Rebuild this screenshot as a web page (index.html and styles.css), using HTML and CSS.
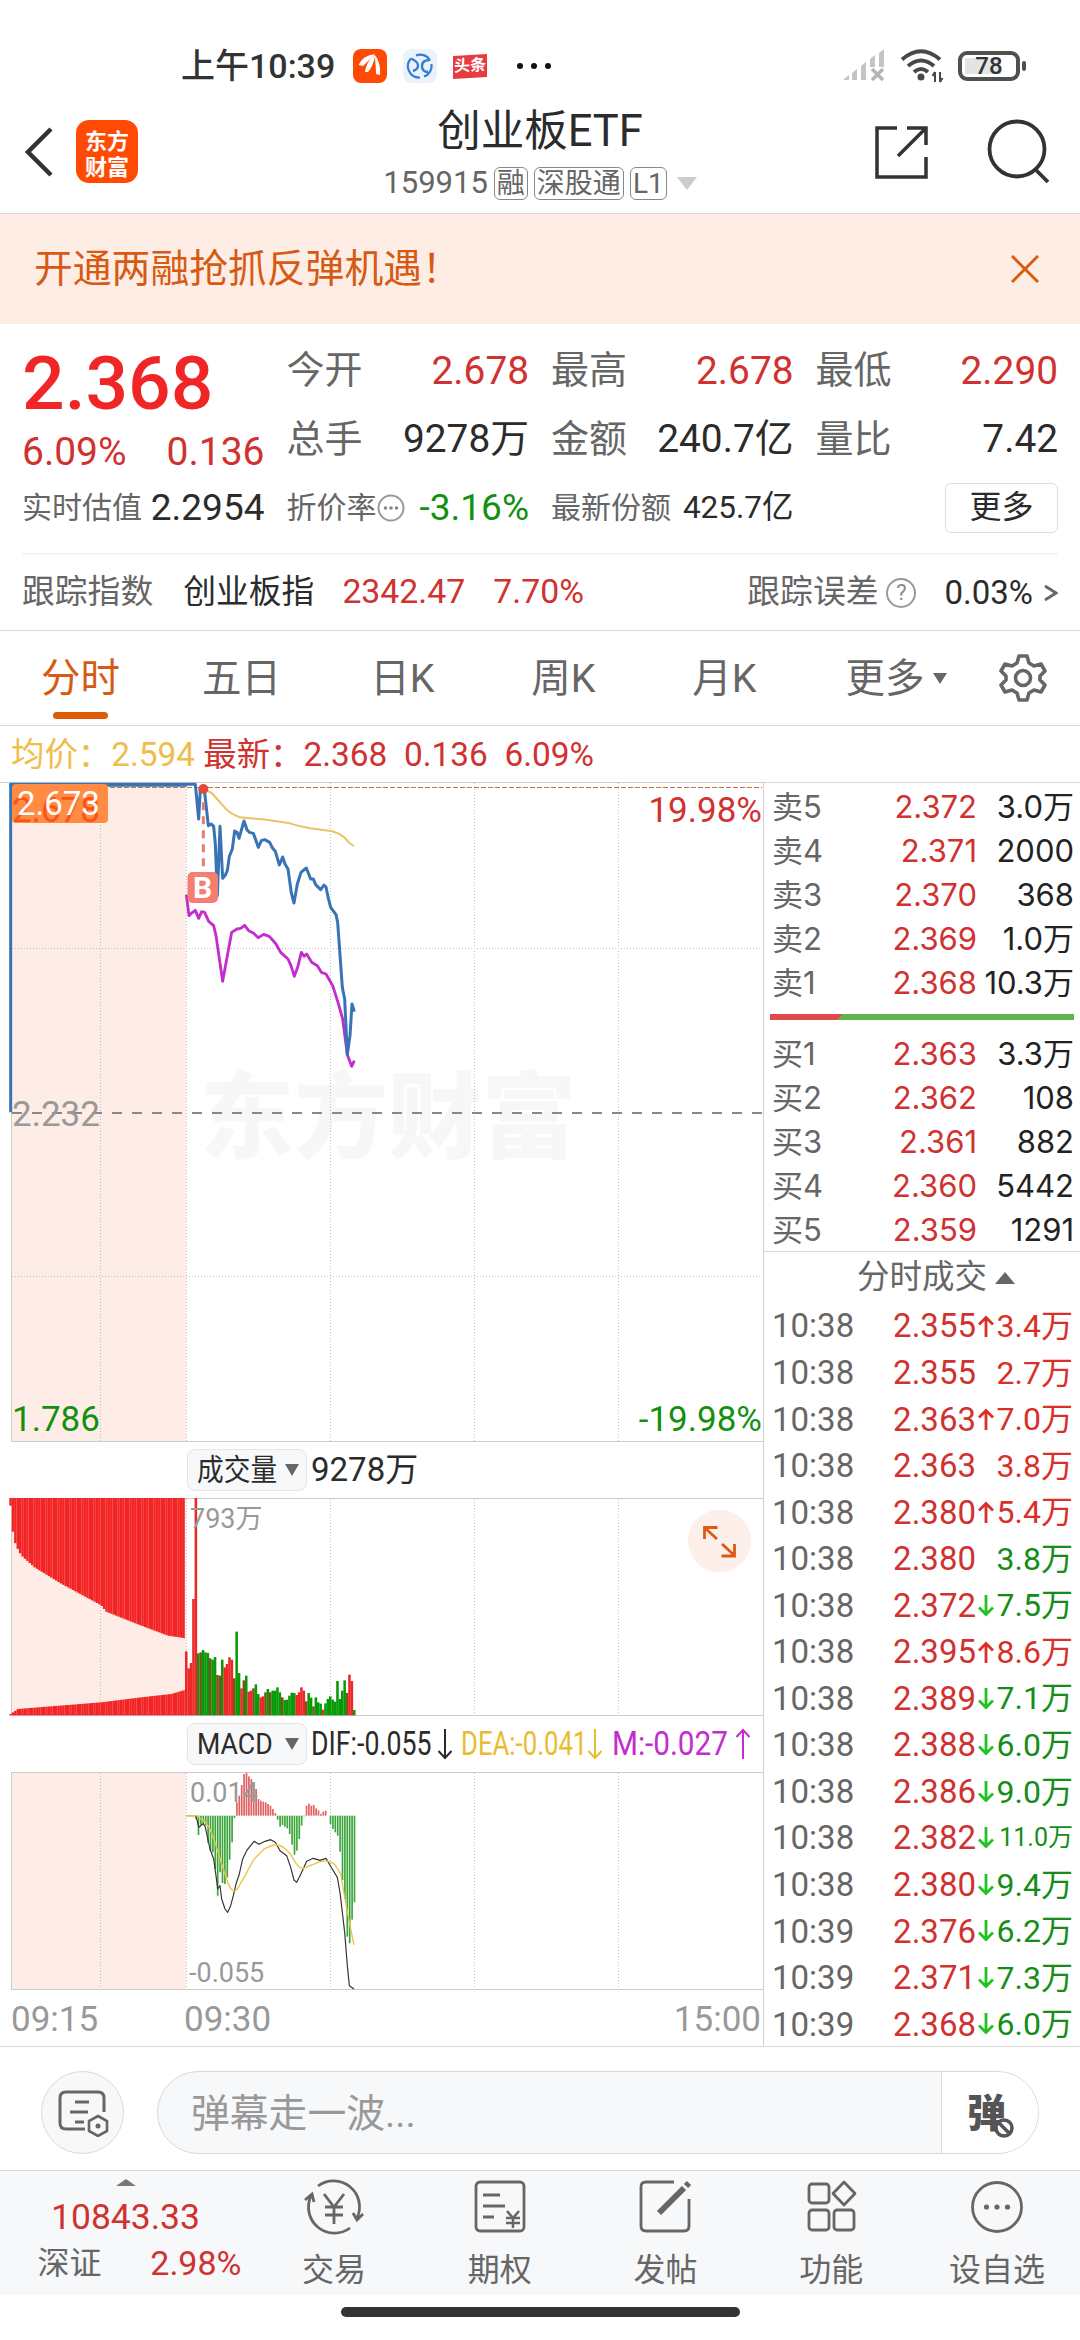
FILE: index.html
```html
<!DOCTYPE html>
<html lang="zh-CN">
<head>
	<meta charset="utf-8">
	<title>创业板ETF</title>
	<link rel="stylesheet" href="styles.css">
</head>
<body>
	<svg width="0" height="0" class="defs">
		<symbol id="up" viewBox="0 0 16 22"><path d="M8 22V3M1 9.500l7-7 7 7" fill="none" stroke="currentColor" stroke-width="2.800"/></symbol>
		<symbol id="down" viewBox="0 0 16 22"><path d="M8 0v19M1 12.500l7 7 7-7" fill="none" stroke="currentColor" stroke-width="2.800"/></symbol>
		<symbol id="long-down" viewBox="0 0 16 32"><path d="M8 1v29M1.500 23L8 30l6.500-7" fill="none" stroke="currentColor" stroke-width="2"/></symbol>
		<symbol id="long-up" viewBox="0 0 16 32"><path d="M8 31V2M1.500 9L8 2l6.500 7" fill="none" stroke="currentColor" stroke-width="2"/></symbol>
	</svg>

	<div class="status">
		<span class="clock">上午10:39</span>
		<svg class="app" width="34" height="34" viewBox="0 0 34 34">
			<rect width="34" height="34" rx="8" fill="#ff4a04"/>
			<path d="M6 16C8 10 14 6 22 5.500C17 8 12 12 6.500 16zM12 23C13 15 17 9 22.500 6C21 12 19 19 15 23zM22 6C25 10 28 17 27 26L23 25C23 18 22 12 22 6z" fill="#fff"/>
			<path d="M6 16C9 9 15 6 22 5.500L10 17z" fill="#fff"/>
		</svg>
		<svg class="app" width="34" height="34" viewBox="0 0 34 34">
			<rect width="34" height="34" rx="8" fill="#ecf2fa"/>
			<path d="M13 6.500A11.300 11.300 0 0 1 27 11M28.500 15A11.300 11.300 0 0 1 21 27.500M17 28.500A11.300 11.300 0 0 1 8 9.500" fill="none" stroke="#2f7fd6" stroke-width="2.200"/>
			<path d="M8 9.500q7 3 7 7t-5 5.500M27 11q-8 0-8 6t6 6" fill="none" stroke="#2f7fd6" stroke-width="2.400"/>
		</svg>
		<span class="toutiao">头条</span>
		<span class="dots"><i></i><i></i><i></i></span>
		<svg class="signal" width="42" height="32" viewBox="0 0 42 32" fill="#c4c4c4">
			<path d="M0 30l6-5v5zM9 23l5-4v11H9zM18 16l5-4v18h-5zM27 9l5-4v12h-5zM36 3l5-4v18h-5z"/>
			<path d="M29 19l11 11M40 19L29 30" stroke="#b5b5b5" stroke-width="3.500"/>
		</svg>
		<svg class="wifi" width="44" height="34" viewBox="0 0 44 34" fill="none" stroke="#484848" stroke-width="4">
			<path d="M2 10.500Q21-6 40 10.500M8 17q13-11 26 0M14 23q7-6 14 0"/>
			<circle cx="21" cy="28" r="2.500" fill="#484848" stroke-width="2"/>
			<path d="M35 23v10M40 23v10M32.500 27l2.500-4M42.500 29L40 33" stroke-width="2"/>
		</svg>
		<span class="battery">78</span>
		<span class="battery-tip"></span>
	</div>

	<div class="header">
		<div class="header-left">
			<svg width="28" height="50" viewBox="0 0 28 50"><path d="M26 2L3 25l23 23" fill="none" stroke="#333" stroke-width="4.500"/></svg>
			<div class="logo">东方<br>财富</div>
		</div>
		<div class="header-title">
			<h1>创业板ETF</h1>
			<div class="code">159915<span>融</span><span>深股通</span><span>L1</span><i></i></div>
		</div>
		<div class="header-right">
			<svg width="56" height="56" viewBox="0 0 56 56" fill="none" stroke="#333" stroke-width="3.500"><path d="M23 4H3v49h49V33M33 4h19v17M52 4L24 32"/></svg>
			<svg width="66" height="66" viewBox="0 0 66 66" fill="none" stroke="#333" stroke-width="3.800"><circle cx="31" cy="30" r="27.500"/><path d="M50 51l12 12"/></svg>
		</div>
	</div>

	<div class="banner">
		<span>开通两融抢抓反弹机遇！</span>
		<svg width="28" height="28" viewBox="0 0 28 28"><path d="M1 1l26 26M27 1L1 27" stroke="#dc5a10" stroke-width="3"/></svg>
	</div>

	<div class="quote">
		<div class="price red">
			<strong>2.368</strong>
			<p><span>6.09%</span><span>0.136</span></p>
		</div>
		<div class="cell"><label>今开</label><b class="red">2.678</b></div>
		<div class="cell"><label>最高</label><b class="red">2.678</b></div>
		<div class="cell"><label>最低</label><b class="red">2.290</b></div>
		<div class="cell"><label>总手</label><b>9278万</b></div>
		<div class="cell"><label>金额</label><b>240.7亿</b></div>
		<div class="cell"><label>量比</label><b>7.42</b></div>
		<div class="cell small"><label>实时估值</label><b>2.2954</b></div>
		<div class="cell small">
			<label>折价率<svg width="28" height="28" viewBox="0 0 28 28"><circle cx="14" cy="14" r="12.500" fill="none" stroke="#999" stroke-width="2"/><g fill="#888"><circle cx="8.500" cy="14" r="1.800"/><circle cx="14" cy="14" r="1.800"/><circle cx="19.500" cy="14" r="1.800"/></g></svg></label>
			<b class="green">-3.16%</b>
		</div>
		<div class="cell small share"><label>最新份额</label><b>425.7亿</b></div>
		<div class="cell small"><span class="more">更多</span></div>
	</div>

	<div class="track">
		<label>跟踪指数</label>
		<span class="name">创业板指</span>
		<span class="red">2342.47</span>
		<span class="red pct">7.70%</span>
		<label class="error">跟踪误差</label>
		<span class="help">?</span>
		<span class="rate">0.03%</span>
		<svg width="14" height="20" viewBox="0 0 14 20"><path d="M1 3l11 7-11 7" fill="none" stroke="#666" stroke-width="2.800"/></svg>
	</div>

	<div class="tabs">
		<div class="tab active">分时</div>
		<div class="tab">五日</div>
		<div class="tab">日K</div>
		<div class="tab">周K</div>
		<div class="tab">月K</div>
		<div class="tab more-tab">更多<i></i></div>
		<svg width="48" height="48" viewBox="0 0 48 48" fill="none" stroke="#666" stroke-width="3.600" stroke-linejoin="round">
			<path d="M20 2h8l2 7 5 3 7-2 4 7-5 5v4l5 5-4 7-7-2-5 3-2 7h-8l-2-7-5-3-7 2-4-7 5-5v-4l-5-5 4-7 7 2 5-3z"/>
			<circle cx="24" cy="24" r="7.500"/>
		</svg>
	</div>

	<div class="legend">
		<span class="avg">均价：2.594</span>
		<span class="red">最新：2.368&nbsp; 0.136&nbsp; 6.09%</span>
	</div>

	<div class="main">
		<div class="charts">
			<svg class="chart" width="763" height="660" viewBox="0 0 763 660">
				<rect x="12" y="0" width="174" height="659" fill="#fdede6"/>
				<text class="watermark" x="200" y="369">东方财富</text>
				<path class="grid" d="M100.500 1v658M186.500 1v658M330.500 1v658M474.500 1v658M618.500 1v658M12 166.500h750M12 494.500h750"/>
				<path class="frame" d="M0 .5h763M11.500 1v658.500H763"/>
				<path d="M12 331h750" stroke="#888" stroke-width="2" stroke-dasharray="10 10"/>
				<path d="M12 5.500h750" stroke="#c8703c" stroke-width="1.200" stroke-dasharray="5 2"/>
				<!-- curves are plotted on a 3x grid -->
				<g transform="translate(0 -13) scale(.33333)" fill="none" stroke-linejoin="round">
					<path stroke="#ecc065" stroke-width="6" d="M616 62L635 72 665 105Q685 133 720 145L800 152 870 163Q900 173 930 178L992 186Q1015 190 1035 207L1048 222 1062 231"/>
					<path stroke="#c42ccd" stroke-width="8.500" d="M559 377L567 440 575 432 586 424 596 448 605 428 614 430 626 457 641 470 648 500 668 637 682 560 695 490 711 480 722 478 734 469 746 485 760 492 775 506 791 496 808 502 828 525 842 550 864 570 873 590 883 622 893 595 904 550 912 562 920 555 935 580 952 590 964 610 978 615 998 650 1014 700 1028 750 1042 857 1055 892 1063 875"/>
					<path stroke="#3873b5" stroke-width="9" d="M32 1030V46H586L596 150 601 60 614 70 625 170 634 165 641 172 646 225 652 380 660 172 668 328 676 318 682 305 688 262 697 240 704 186 711 190 717 208 732 156 741 182 748 190 760 193 775 235 784 215 794 212 809 220 818 238 826 247 838 288 848 264 855 285 864 300 874 372 882 402 892 345 903 310 919 297 932 330 940 330 947 347 962 362 972 348 978 354 985 388 992 415 1008 437 1013 460 1027 655 1034 690 1042 857 1050 800 1056 705 1063 728"/>
					<path stroke="#3873b5" stroke-width="11" d="M28 48H560"/>
					<path stroke="#ea7b70" stroke-width="9" stroke-dasharray="24 18" d="M610 100V295"/>
					<circle cx="610" cy="60" r="15" fill="#e44a3c"/>
				</g>
				<rect x="187.500" y="90" width="30.500" height="31" rx="5" fill="#f57e70"/>
				<text class="buy" x="202.500" y="116">B</text>
				<rect x="12" y="2" width="96" height="39" rx="4" fill="#ff8b45"/>
				<text class="axis under" x="12" y="40">2.678</text>
				<text class="tag" x="17" y="33">2.673</text>
				<text class="axis red end" x="762" y="40">19.98%</text>
				<text class="axis gray" x="12" y="344">2.232</text>
				<text class="axis green" x="12" y="649">1.786</text>
				<text class="axis green end" x="762" y="649">-19.98%</text>
			</svg>

			<div class="bar">
				<span class="pick"><em>成交量</em><i></i></span>
				<span class="total">9278万</span>
			</div>
			<svg class="chart" width="763" height="218" viewBox="0 0 763 218">
				<rect x="12" y="0" width="174" height="217" fill="#fdede6"/>
				<path class="grid" d="M100.500 1v216M186.500 1v216M330.500 1v216M474.500 1v216M618.500 1v216"/>
				<path class="frame" d="M12 .5h751M11.500 0v217.500H763"/>
				<g id="auction" transform="scale(.33333)"></g>
				<g id="volume" transform="scale(.33333)"></g>
				<text class="axis mini gray" x="190" y="30">793万</text>
				<circle cx="719.500" cy="43" r="31.500" fill="#fdf0ea"/>
				<path d="M704.500 41V29.500h13M705 30l12 11M734.500 46v12h-13M734 57l-12-11" fill="none" stroke="#dc5a14" stroke-width="2.800"/>
			</svg>

			<div class="bar">
				<span class="pick"><em>MACD</em><i></i></span>
				<span class="dif"><em>DIF:-0.055</em><svg width="16" height="32"><use href="#long-down"/></svg></span>
				<span class="dea"><em>DEA:-0.041</em><svg width="16" height="32"><use href="#long-down"/></svg></span>
				<span class="macd"><em>M:-0.027</em><svg width="16" height="32"><use href="#long-up"/></svg></span>
			</div>
			<svg class="chart" width="763" height="218" viewBox="0 0 763 218">
				<rect x="12" y="0" width="174" height="217" fill="#fdede6"/>
				<path class="grid" d="M100.500 1v216M186.500 1v216M330.500 1v216M474.500 1v216M618.500 1v216"/>
				<path class="frame" d="M12 .5h751M11.500 0v217.500H763"/>
				<g id="macd" transform="scale(.33333)"></g>
				<g transform="translate(0 -73) scale(.33333)" fill="none" stroke-linejoin="round">
					<path stroke="#333" stroke-width="3.500" d="M559 350H588L596 385 603 380 610 374 616 385 630 450 641 480 648 530 653 570 660 560 665 600 675 630 683 640 692 620 700 590 708 555 718 525 728 480 740 455 762 427 777 436 795 427 812 422 826 430 840 455 860 470 872 505 882 543 890 550 900 530 912 505 920 487 940 478 960 484 978 478 995 507 1012 535 1020 580 1034 700 1042 800 1048 860 1062 870"/>
					<path stroke="#ecc344" stroke-width="4" d="M559 350H590L615 368 630 390 645 430 665 495 685 555Q700 590 715 565L735 530 760 483 790 452Q826 428 850 445L872 465Q895 512 910 508L930 500 955 490Q985 480 1005 497L1022 525 1035 600 1048 670 1062 738"/>
				</g>
				<text class="axis mini gray" x="190" y="30">0.014</text>
				<text class="axis mini gray" x="189" y="210">-0.055</text>
			</svg>
			<div class="times"><span>09:15</span><span>09:30</span><span class="close">15:00</span></div>
		</div>

		<div class="side">
			<div class="book">
				<div class="level"><label>卖5</label><b>2.372</b><span>3.0万</span></div>
				<div class="level"><label>卖4</label><b>2.371</b><span>2000</span></div>
				<div class="level"><label>卖3</label><b>2.370</b><span>368</span></div>
				<div class="level"><label>卖2</label><b>2.369</b><span>1.0万</span></div>
				<div class="level"><label>卖1</label><b>2.368</b><span>10.3万</span></div>
				<div class="ratio"></div>
				<div class="level"><label>买1</label><b>2.363</b><span>3.3万</span></div>
				<div class="level"><label>买2</label><b>2.362</b><span>108</span></div>
				<div class="level"><label>买3</label><b>2.361</b><span>882</span></div>
				<div class="level"><label>买4</label><b>2.360</b><span>5442</span></div>
				<div class="level"><label>买5</label><b>2.359</b><span>1291</span></div>
			</div>
			<div class="deals-title">分时成交<i></i></div>
			<div class="deals">
				<div class="deal up"><label>10:38</label><b>2.355</b><svg><use href="#up"/></svg><span>3.4万</span></div>
				<div class="deal up"><label>10:38</label><b>2.355</b><span>2.7万</span></div>
				<div class="deal up"><label>10:38</label><b>2.363</b><svg><use href="#up"/></svg><span>7.0万</span></div>
				<div class="deal up"><label>10:38</label><b>2.363</b><span>3.8万</span></div>
				<div class="deal up"><label>10:38</label><b>2.380</b><svg><use href="#up"/></svg><span>5.4万</span></div>
				<div class="deal down"><label>10:38</label><b>2.380</b><span>3.8万</span></div>
				<div class="deal down"><label>10:38</label><b>2.372</b><svg><use href="#down"/></svg><span>7.5万</span></div>
				<div class="deal up"><label>10:38</label><b>2.395</b><svg><use href="#up"/></svg><span>8.6万</span></div>
				<div class="deal down"><label>10:38</label><b>2.389</b><svg><use href="#down"/></svg><span>7.1万</span></div>
				<div class="deal down"><label>10:38</label><b>2.388</b><svg><use href="#down"/></svg><span>6.0万</span></div>
				<div class="deal down"><label>10:38</label><b>2.386</b><svg><use href="#down"/></svg><span>9.0万</span></div>
				<div class="deal down"><label>10:38</label><b>2.382</b><svg><use href="#down"/></svg><span class="long">11.0万</span></div>
				<div class="deal down"><label>10:38</label><b>2.380</b><svg><use href="#down"/></svg><span>9.4万</span></div>
				<div class="deal down"><label>10:39</label><b>2.376</b><svg><use href="#down"/></svg><span>6.2万</span></div>
				<div class="deal down"><label>10:39</label><b>2.371</b><svg><use href="#down"/></svg><span>7.3万</span></div>
				<div class="deal down"><label>10:39</label><b>2.368</b><svg><use href="#down"/></svg><span>6.0万</span></div>
			</div>
		</div>
	</div>

	<div class="chat">
		<div class="round">
			<svg width="52" height="48" viewBox="0 0 52 48" fill="none" stroke="#666" stroke-width="3">
				<path d="M28 40H9q-6 0-6-6V9q0-6 6-6h32q6 0 6 6v14M18 13h14M13 23h18M18 33h9" />
				<path d="M41 27l9 5v10l-9 5-9-5V32z" stroke-width="2.600"/><circle cx="41" cy="37" r="2.500" fill="#666" stroke="none"/>
			</svg>
		</div>
		<div class="input">
			<span class="placeholder">弹幕走一波...</span>
			<span class="danmu">弹<svg width="22" height="22" viewBox="0 0 22 22"><circle cx="11" cy="11" r="8" fill="#fff" stroke="#555" stroke-width="3.500"/><path d="M6 6l10 10" stroke="#555" stroke-width="3.500"/></svg></span>
		</div>
	</div>

	<div class="footer">
		<div class="index red">
			<i></i>
			<strong>10843.33</strong>
			<p><label>深证</label><span>2.98%</span></p>
		</div>
		<div class="item">
			<svg width="60" height="56" viewBox="0 0 60 56"><path d="M14 7a26 26 0 0 1 39 32M46 49A26 26 0 0 1 7 17M1 21l7-6 2 8M59 35l-6 6-4-7M20 15l10 13 10-13M21 28h18M21 36h18M30 28v17"/></svg>
			<span>交易</span>
		</div>
		<div class="item">
			<svg width="60" height="56" viewBox="0 0 60 56"><rect x="6" y="3" width="48" height="49" rx="4"/><path d="M13 16h17M13 27h22M13 38h11"/><path d="M37 32l6 7 6-7M36 39h14M36 44h14M43 39v10" stroke-width="2.500"/></svg>
			<span>期权</span>
		</div>
		<div class="item">
			<svg width="60" height="56" viewBox="0 0 60 56"><path d="M39 3H11q-5 0-5 5v39q0 5 5 5h38q5 0 5-5V20"/><path d="M24 34l25-25" stroke-width="6"/><path d="M51 7l3-3" stroke-width="6"/></svg>
			<span>发帖</span>
		</div>
		<div class="item">
			<svg width="60" height="56" viewBox="0 0 60 56"><rect x="8" y="5" width="20" height="19" rx="3"/><rect x="8" y="31" width="20" height="20" rx="3"/><rect x="33" y="31" width="20" height="20" rx="3"/><path d="M43 3l11 11.500L43 26 32 14.500z" stroke-linejoin="round"/></svg>
			<span>功能</span>
		</div>
		<div class="item">
			<svg width="60" height="56" viewBox="0 0 60 56"><circle cx="30" cy="28" r="24.500"/><g fill="#666" stroke="none"><circle cx="19.500" cy="28" r="2.600"/><circle cx="30" cy="28" r="2.600"/><circle cx="40.500" cy="28" r="2.600"/></g></svg>
			<span>设自选</span>
		</div>
	</div>
	<div class="home"></div>

	<script src="script.js"></script>
</body>
</html>
```
FILE: styles.css
```css
body{
	margin: 0;
	width: 1080px;
	height: 2340px;
	overflow: hidden;
	background: #fff;
	color: #2b2b2b;
	font-family: Roboto, "Noto Sans CJK SC", sans-serif;
	line-height: 1.2;
}
h1,p{
	margin: 0;
	font-weight: 400;
}
b,strong{
	font-weight: 400;
}
em,i{
	font-style: normal;
}
svg{
	flex: none;
}
.defs{
	position: absolute;
}
.red{
	color: #d0322f;
	fill: #d0322f;
}
.green{
	color: #12900f;
	fill: #12900f;
}
.gray{
	fill: #999;
}

/* 状态栏 */
.status{
	display: flex;
	align-items: center;
	height: 68px;
	padding: 32px 54px 0 181px;
}
.clock{
	width: 156px;
	margin-right: 16px;
	font-size: 34px;
	font-weight: 500;
	color: #333;
	white-space: nowrap;
}
.app{
	margin-right: 16px;
}
.toutiao{
	width: 34px;
	height: 23px;
	line-height: 22px;
	background: #e83b40;
	color: #fff;
	font-size: 16px;
	font-weight: 700;
	text-align: center;
	transform: skewY(-3deg);
}
.dots{
	display: flex;
	gap: 8px;
	margin-left: 30px;
}
.dots i{
	width: 6px;
	height: 6px;
	border-radius: 3px;
	background: #111;
}
.signal{
	margin-left: auto;
}
.wifi{
	margin: 0 14px 0 15px;
}
.battery{
	box-sizing: border-box;
	width: 62px;
	height: 30px;
	border: 4px solid #505050;
	border-radius: 9px;
	background: #fff linear-gradient(#e4e4e4, #e4e4e4) no-repeat 3px 3px / 36px 16px;
	line-height: 23px;
	font-size: 24px;
	font-weight: 500;
	text-align: center;
	color: #333;
}
.battery-tip{
	width: 4px;
	height: 10px;
	margin-left: 2px;
	border-radius: 2px;
	background: #505050;
}

/* 标题 */
.header{
	display: grid;
	grid-template-columns: 1fr auto 1fr;
	height: 113px;
	border-bottom: 1px solid #d6d6d6;
}
.header-left{
	display: flex;
	align-items: center;
	gap: 23px;
	padding: 0 0 10px 25px;
}
.logo{
	width: 62px;
	height: 54px;
	padding-top: 9px;
	border-radius: 13px;
	background: #ff4a04;
	color: #fff;
	font-size: 22px;
	font-weight: 700;
	line-height: 26px;
	text-align: center;
}
.header-title{
	text-align: center;
}
.header-title h1{
	font-size: 43.500px;
	line-height: 63px;
}
.code{
	display: flex;
	align-items: center;
	justify-content: center;
	height: 40px;
	font-size: 31px;
	color: #666;
}
.code span{
	height: 31px;
	margin-left: 6px;
	padding: 0 2px;
	border: 1px solid #888;
	border-radius: 6px;
	font-size: 28px;
	line-height: 31px;
}
.code i{
	margin-left: 10px;
	border: 10px solid transparent;
	border-top: 13px solid #ccc;
	border-bottom: 0;
}
.header-right{
	display: flex;
	align-items: center;
	justify-content: flex-end;
	gap: 56px;
	padding: 0 28px 10px 0;
}

.banner{
	display: flex;
	align-items: center;
	justify-content: space-between;
	height: 110px;
	padding: 0 41px 0 34px;
	background: #fdede4;
	color: #d65a14;
	font-size: 38.800px;
}

/* 行情 */
.quote{
	display: grid;
	grid-template-columns: repeat(4, 1fr);
	grid-template-rows: 68px 69px 68px;
	column-gap: 22px;
	padding: 13px 22px 11px;
}
.price{
	grid-row: span 2;
}
.price strong{
	display: block;
	font-size: 75px;
	font-weight: 500;
	line-height: 92px;
	color: #f02626;
}
.price p{
	display: flex;
	justify-content: space-between;
	font-size: 39px;
	line-height: 46px;
}
.cell{
	display: flex;
	align-items: center;
	justify-content: space-between;
	font-size: 38.800px;
	white-space: nowrap;
}
.cell label{
	display: flex;
	align-items: center;
	font-size: 38px;
	color: #666;
}
.small{
	font-size: 37px;
}
.small label{
	font-size: 30px;
}
.share{
	font-size: 31.500px;
}
.more{
	width: 111px;
	height: 48px;
	margin-left: auto;
	border: 1px solid #ddd;
	border-radius: 6px;
	font-size: 32px;
	line-height: 46px;
	text-align: center;
}
.track{
	display: flex;
	align-items: center;
	height: 75px;
	margin: 0 22px;
	border-top: 2px solid #f4f4f4;
	font-size: 33.800px;
}
.track label,.track .name{
	font-size: 32.800px;
	color: #666;
}
.track .name{
	margin: 0 28px 0 30px;
	color: #2b2b2b;
}
.pct{
	margin-left: 28px;
}
.track .error{
	margin-left: auto;
}
.help{
	width: 26px;
	height: 26px;
	margin: 0 28px 0 8px;
	border: 2px solid #999;
	border-radius: 50%;
	color: #888;
	font-size: 22px;
	line-height: 26px;
	text-align: center;
}
.rate{
	font-size: 33px;
}
.track svg{
	margin-left: 11px;
}

.tabs{
	display: flex;
	align-items: center;
	height: 94px;
	border-top: 1px solid #d6d6d6;
	border-bottom: 1px solid #d6d6d6;
}
.tab{
	display: flex;
	flex-direction: column;
	align-items: center;
	width: 161px;
	font-size: 39.500px;
	line-height: 97px;
	color: #666;
}
.active{
	color: #d65a14;
}
.active:after{
	content: "";
	width: 55px;
	height: 7px;
	margin: -15px 0 8px;
	border-radius: 4px;
	background: #e05a0c;
}
.more-tab{
	flex-direction: row;
	justify-content: center;
	width: 182px;
	margin-right: 12px;
}
.more-tab i{
	margin-left: 8px;
	border: 7px solid transparent;
	border-top: 11px solid #666;
	border-bottom: 0;
}
.legend{
	height: 56px;
	padding-left: 11px;
	font-size: 33.400px;
	line-height: 57px;
	white-space: nowrap;
}
.avg{
	color: #eebd4c;
}

/* 图表 */
.main{
	display: flex;
	height: 1264px;
	border-bottom: 1px solid #d6d6d6;
}
.charts{
	width: 763px;
	border-right: 1px solid #d0d0d0;
}
.chart{
	display: block;
}
.grid,.frame{
	fill: none;
	stroke: #ccc;
}
.grid{
	stroke: #c0c0c0;
	stroke-dasharray: 1 2;
}
.axis{
	font-size: 35px;
}
.mini{
	font-size: 27px;
}
.end{
	text-anchor: end;
}
.tag{
	fill: #fff;
	font-size: 33px;
}
.under{
	fill: #fb5410;
}
.buy{
	fill: #fff;
	font-size: 30px;
	font-weight: 700;
	text-anchor: middle;
}
.watermark{
	fill: #f7f7f7;
	font-size: 94px;
	font-weight: 900;
}
.bar{
	display: flex;
	align-items: center;
	height: 56px;
	padding-left: 187px;
}
.bar em{
	display: inline-block;
	transform-origin: 0 50%;
	white-space: nowrap;
}
.pick{
	display: flex;
	align-items: center;
	box-sizing: border-box;
	width: 120px;
	height: 42px;
	padding-left: 9px;
	border: 1px solid #e4e5e8;
	border-radius: 8px;
	background: #f7f8fa;
	font-size: 30px;
}
.pick em{
	width: 88px;
	transform: scaleX(.89);
}
.pick i{
	border: 7px solid transparent;
	border-top: 12px solid #666;
	border-bottom: 0;
}
.total{
	margin-left: 4px;
	font-size: 33px;
}
.dif,.dea,.macd{
	display: flex;
	align-items: center;
	font-size: 33px;
}
.dif{
	width: 150px;
	margin-left: 4px;
}
.dif em,.dea em{
	width: 126px;
	transform: scaleX(.81);
}
.dea{
	width: 151px;
	color: #e9bc30;
}
.dea em{
	transform: scaleX(.78);
}
.macd{
	color: #c42ccd;
}
.macd em{
	width: 123px;
	transform: scaleX(.9);
}
.times{
	display: flex;
	height: 56px;
	padding: 0 2px 0 11px;
	color: #999;
	font-size: 35px;
	line-height: 60px;
}
.times span{
	width: 173px;
}
.times .close{
	width: auto;
	margin-left: auto;
}

/* 盘口 */
.side{
	flex: 1;
	color: #666;
}
.book{
	height: 466px;
	padding: 2px 6px 0 8px;
	border-top: 1px solid #d6d6d6;
	border-bottom: 1px solid #d6d6d6;
	font-family: Inter, "Noto Sans CJK SC", sans-serif;
	font-size: 31px;
}
.level,.deal{
	display: flex;
	align-items: center;
	height: 44px;
	white-space: nowrap;
}
.level b,.deal b{
	color: #d0322f;
	text-align: right;
}
.level label{
	width: 70px;
}
.level b{
	width: 135px;
}
.level span{
	margin-left: auto;
	color: #222;
}
.ratio{
	height: 6px;
	margin: 9px 0 12px -2px;
	background: linear-gradient(135deg, #e04a4a 51px, #5fb54c 52px);
}
.deals-title{
	display: flex;
	align-items: center;
	justify-content: center;
	height: 51px;
	padding-left: 28px;
	font-size: 32.500px;
}
.deals-title i{
	margin-left: 8px;
	border: 10px solid transparent;
	border-bottom: 12px solid #666;
	border-top: 0;
}
.deals{
	padding: 0 7px 0 8px;
	font-size: 33px;
}
.deal{
	height: 46.550px;
}
.deal b{
	width: 123px;
}
.deal label{
	width: 81px;
}
.deal svg{
	width: 16px;
	height: 22px;
	margin-left: 2px;
}
.deal span{
	margin-left: auto;
	font-size: 32px;
}
.deal .long{
	font-size: 25px;
}
.up svg,.up span{
	color: #d83028;
}
.down svg{
	color: #1fc421;
}
.down span{
	color: #168d18;
}

/* 弹幕 */
.chat{
	display: flex;
	align-items: center;
	height: 115px;
	padding: 8px 41px 0;
	border-bottom: 1px solid #d6d6d6;
}
.round{
	display: flex;
	align-items: center;
	justify-content: center;
	box-sizing: border-box;
	width: 83px;
	height: 83px;
	border: 1px solid #d8dade;
	border-radius: 50%;
	background: #f7f8fa;
}
.input{
	display: flex;
	flex: 1;
	box-sizing: border-box;
	height: 83px;
	margin-left: 33px;
	border: 1px solid #d5d7da;
	border-radius: 42px;
	background: #f7f8fa;
	overflow: hidden;
	line-height: 84px;
}
.placeholder{
	flex: 1;
	padding-left: 33px;
	color: #999;
	font-size: 38.800px;
}
.danmu{
	position: relative;
	width: 71px;
	padding-left: 25px;
	border-left: 1px solid #d5d7da;
	background: #fff;
	color: #555;
	font-size: 39px;
	font-weight: 900;
}
.danmu svg{
	position: absolute;
	left: 51px;
	top: 45px;
}

/* 底部 */
.footer{
	display: flex;
	height: 124px;
	background: #f7f8fa;
}
.index{
	display: flex;
	flex-direction: column;
	align-items: center;
	width: 251px;
}
.index i{
	margin-top: 8px;
	border: 10px solid transparent;
	border-bottom: 7px solid #777;
	border-top: 0;
}
.index strong{
	font-size: 35.500px;
	line-height: 42px;
	margin: 10px 0 4px;
}
.index p{
	display: flex;
	justify-content: space-between;
	width: 204px;
	margin-left: 28px;
	font-size: 34px;
	line-height: 42px;
}
.index label{
	font-size: 32px;
	color: #666;
}
.item{
	display: flex;
	flex: 1;
	flex-direction: column;
	align-items: center;
	padding-top: 8px;
	color: #666;
	font-size: 32px;
	line-height: 44px;
}
.item svg{
	margin-bottom: 13px;
	fill: none;
	stroke: #666;
	stroke-width: 2.800;
}
.home{
	width: 399px;
	height: 10px;
	margin: 12px auto 0;
	border-radius: 5px;
	background: #333;
}
```
FILE: script.js
```js
var NS = 'http://www.w3.org/2000/svg';
var START = 555, STEP = 7.2, BOTTOM = 652, ZERO = 131;

function bar(parent, x, y, w, h, color) {
	var r = document.createElementNS(NS, 'rect');
	r.setAttribute('x', x.toFixed(1));
	r.setAttribute('y', y);
	r.setAttribute('width', w);
	r.setAttribute('height', h);
	r.setAttribute('fill', color);
	parent.appendChild(r);
}

// linear interpolation over [x, y] pairs
function at(points, x) {
	for (var i = 1; i < points.length; i++) {
		var a = points[i - 1], b = points[i];
		if (x <= b[0]) return a[1] + (b[1] - a[1]) * (x - a[0]) / (b[0] - a[0]);
	}
	return points[points.length - 1][1];
}

// 集合竞价
var auction = document.getElementById('auction');
var upper = [[28, 23], [36, 110], [44, 142], [60, 172], [100, 208], [180, 257], [300, 322], [315, 341], [400, 375], [500, 413], [555, 421]];
var lower = [[28, 4], [50, 19], [300, 39], [420, 54], [510, 64], [555, 77]];
for (var i = 0, x = 28; x < 554; i++, x += 7.2) {
	var h = at(upper, x), l = at(lower, x), w = Math.min(7.4, 555 - x);
	bar(auction, x, 0, w, h, i % 2 ? '#f12626' : '#f42222');
	bar(auction, x, BOTTOM - l, w, l, i % 2 ? '#f12626' : '#f42222');
}

// 成交量: r 涨, g 跌, m 平
var colors = { r: '#ee2626', g: '#069b06', m: '#80501a' };
var volume = ('r192 r141 r157 r349 r652 g186 m189 g196 g189 g187 m171 g167 g175 m121 m119 g167 r144 r154 r174 r167 m111 ' +
	'g251 g127 r81 m105 g119 r71 r74 m81 g93 g64 r54 r57 m69 g79 m69 g74 g74 g84 g69 m54 g46 g47 g59 g68 g67 r61 r69 r84 r74 m42 ' +
	'g67 g53 m27 g54 g39 g35 r17 g36 g49 g57 g47 g41 g103 g49 g74 g105 m67 r122 r103 g16').split(' ');
volume.forEach(function (v, i) {
	var h = +v.slice(1);
	bar(document.getElementById('volume'), START + i * STEP, BOTTOM - h, 7.6, h, colors[v[0]]);
});

var macd = [0, 0, 0, 0, 10, 58, 30, 25, 30, 82, 105, 110, 160, 240, 170, 202, 205, 185, 132, 80, 7,
	-40, -60, -92, -125, -128, -118, -110, -100, -80, -50, -45, -42, -40, -35, -30, -20, -8,
	12, 33, 28, 33, 38, 55, 87, 117, 105, 70, 30, 2, -30, -36, -30, -32, -22, -16, -5, -12, -15, 0,
	25, 40, 50, 60, 108, 193, 250, 363, 383, 312, 260];
macd.forEach(function (v, i) {
	if (!v) return;
	bar(document.getElementById('macd'), START + 2 + i * STEP, v > 0 ? ZERO : ZERO + v, 5, Math.abs(v), v > 0 ? '#3ba53b' : '#e06060');
});
```
